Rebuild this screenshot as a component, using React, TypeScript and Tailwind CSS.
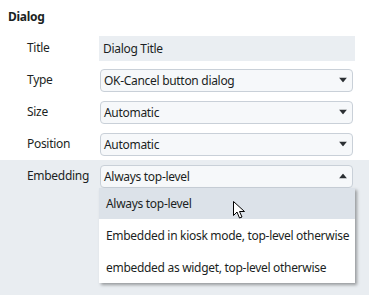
import React from 'react'

function Caret({ up = false }: { up?: boolean }) {
  return (
    <svg width="8" height="5" viewBox="0 0 8 5" className="absolute right-[5px] top-1/2 -translate-y-1/2">
      {up ? <path d="M0 5 L4 0 L8 5 Z" fill="#2b2f33" /> : <path d="M0 0 L8 0 L4 5 Z" fill="#2b2f33" />}
    </svg>
  )
}

function Select({ value, open = false }: { value: string; open?: boolean }) {
  return (
    <div className="relative ml-px h-[23px] w-[253px] rounded-[4px] border border-[#c9d0d8] bg-[#f6f8fa] pl-[3px] leading-[21px]">
      {value}
      <Caret up={open} />
    </div>
  )
}

function Row({ label, children, className = '' }: { label: string; children: React.ReactNode; className?: string }) {
  return (
    <div className={`flex h-8 items-center pl-[27px] ${className}`}>
      <div className="w-[72px]">{label}</div>
      {children}
    </div>
  )
}

export default function App() {
  return (
    <div className="relative h-[295px] w-[369px] overflow-hidden whitespace-nowrap bg-white font-['Segoe_UI','Noto_Sans',sans-serif] text-[12px] tracking-[-0.3px] text-[#1b1f23]">
      <div className="flex h-8 items-center pl-2 pt-[2px] font-bold">Dialog</div>
      <Row label="Title">
        <div className="h-[25px] w-[256px] bg-[#eaeef2] pl-1 leading-[25px]">Dialog Title</div>
      </Row>
      <Row label="Type">
        <Select value="OK-Cancel button dialog" />
      </Row>
      <Row label="Size">
        <Select value="Automatic" />
      </Row>
      <Row label="Position">
        <Select value="Automatic" />
      </Row>
      <div className="h-[135px] bg-[#e9edf1]">
        <Row label="Embedding">
          <Select value="Always top-level" open />
        </Row>
      </div>

      <div className="absolute left-[99px] top-[188px] w-[256px] bg-white shadow-[2px_2px_3px_rgba(0,0,0,0.35)]">
        <div className="flex h-[31px] items-center bg-[#dce2e9] pl-[7px]">Always top-level</div>
        <div className="flex h-[33px] items-center pl-[7px]">Embedded in kiosk mode, top-level otherwise</div>
        <div className="flex h-[31px] items-center pl-[7px]">embedded as widget, top-level otherwise</div>
      </div>

      <svg width="14" height="19" viewBox="0 0 14 19" className="absolute left-[233px] top-[201px]">
        <path d="M0.5 0.5 L0.5 14.5 L4 11 L6.5 17 L9 16 L6.5 10.5 L11.5 10.5 Z" fill="white" stroke="black" strokeWidth="1" strokeLinejoin="miter" />
      </svg>
    </div>
  )
}
